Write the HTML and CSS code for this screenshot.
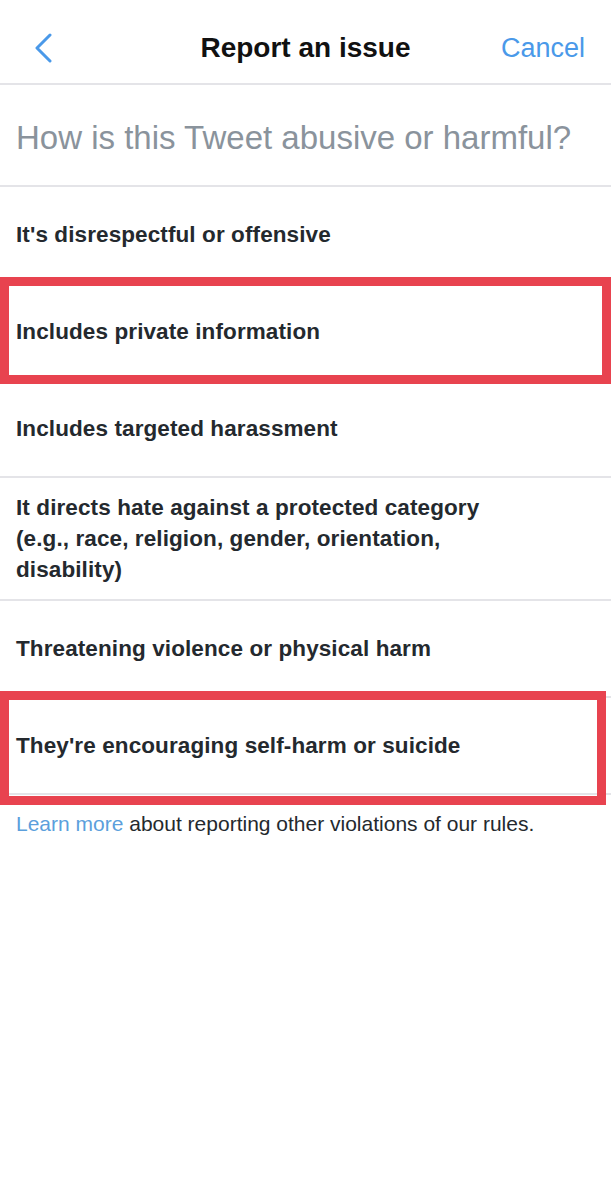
FILE: index.html
```html
<!DOCTYPE html>
<html>
<head>
<meta charset="utf-8">
<link rel="stylesheet" href="styles.css">
</head>
<body>
<div class="screen">
  <header class="nav">
    <span class="back">
      <svg width="20" height="30" viewBox="0 0 20 30"><path d="M16 2 L3 15 L16 28" fill="none" stroke="#4a99e9" stroke-width="3" stroke-linecap="round" stroke-linejoin="round"/></svg>
    </span>
    <h1 class="title">Report an issue</h1>
    <span class="cancel">Cancel</span>
  </header>
  <div class="question">How is this Tweet abusive or harmful?</div>
  <ul class="options">
    <li class="option">It's disrespectful or offensive</li>
    <li class="option">Includes private information</li>
    <li class="option">Includes targeted harassment</li>
    <li class="option multi">It directs hate against a protected category (e.g., race, religion, gender, orientation, disability)</li>
    <li class="option">Threatening violence or physical harm</li>
    <li class="option">They're encouraging self-harm or suicide</li>
  </ul>
  <p class="footer"><span class="link">Learn more</span> about reporting other violations of our rules.</p>
  <div class="mark mark-one"></div>
  <div class="mark mark-two"></div>
</div>
</body>
</html>
```
FILE: styles.css
```css
html, body {
  margin: 0;
  padding: 0;
  background: #ffffff;
}
.screen {
  position: relative;
  width: 611px;
  min-height: 1200px;
  font-family: "Liberation Sans", Arial, sans-serif;
  color: #24292e;
}
.nav {
  height: 70px;
  display: flex;
  align-items: center;
  justify-content: space-between;
  padding: 13px 26px 0 34px;
  border-bottom: 2px solid #e4e4e8;
  box-sizing: content-box;
}
.back {
  display: flex;
  width: 60px;
}
.title {
  margin: 0;
  font-size: 28px;
  font-weight: bold;
  color: #111111;
  padding-left: 18px;
}
.cancel {
  font-size: 27px;
  color: #4a99e9;
  width: 86px;
  text-align: right;
}
.question {
  height: 94px;
  display: flex;
  align-items: center;
  padding: 6px 16px 0;
  font-size: 33px;
  color: #8a939c;
  letter-spacing: 0;
  border-bottom: 2px solid #e4e4e8;
}
.options {
  list-style: none;
  margin: 0;
  padding: 0;
}
.option {
  min-height: 97px;
  display: flex;
  align-items: center;
  padding: 0 16px;
  box-sizing: border-box;
  font-size: 22.5px;
  font-weight: bold;
  letter-spacing: 0.1px;
  line-height: 31px;
  border-bottom: 2px solid #e4e4e8;
}
.option.multi {
  min-height: 121px;
  padding: 14px 110px 14px 16px;
}
.footer {
  margin: 17px 0 0;
  padding: 0 16px;
  font-size: 21px;
  color: #24292e;
}
.link {
  color: #5b9fdc;
}
.mark {
  position: absolute;
  left: 0;
  border: 9px solid #e8434f;
  box-sizing: border-box;
}
.mark-one {
  top: 277px;
  width: 611px;
  height: 107px;
}
.mark-two {
  top: 691px;
  width: 606px;
  height: 114px;
}
```
